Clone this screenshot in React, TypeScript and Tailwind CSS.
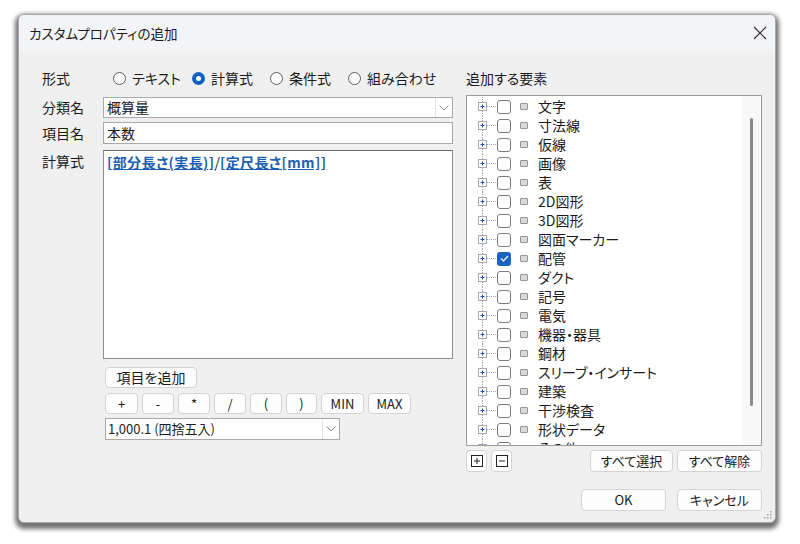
import React from 'react';

const FONT = { fontFamily: '"Noto Sans CJK JP", "Noto Sans", sans-serif' };

const TREE_ITEMS = [
  '文字', '寸法線', '仮線', '画像', '表', '2D図形', '3D図形', '図面マーカー', '配管',
  'ダクト', '記号', '電気', '機器・器具', '鋼材', 'スリーブ・インサート', '建築', '干渉検査', '形状データ', 'その他',
];

const Radio: React.FC<{ label: string; checked?: boolean; className?: string }> = ({ label, checked, className = '' }) => (
  <div className={`flex items-center gap-[6px] ${className}`}>
    {checked ? (
      <span className="w-[13px] h-[13px] rounded-full bg-[#1061c4] flex items-center justify-center shrink-0">
        <span className="w-[5px] h-[5px] rounded-full bg-white" />
      </span>
    ) : (
      <span className="w-[13px] h-[13px] rounded-full border border-[#5c5c5c] bg-white shrink-0" />
    )}
    <span className="whitespace-nowrap">{label}</span>
  </div>
);

const Button: React.FC<{ className?: string; children: React.ReactNode }> = ({ className = '', children }) => (
  <div className={`flex items-center justify-center bg-[#fdfdfd] border border-[#d3d3d3] rounded-[4px] text-[13px] text-[#1b1b1b] ${className}`}>
    {children}
  </div>
);

const Chevron = () => (
  <svg width="10" height="6" viewBox="0 0 10 6">
    <path d="M0.5 0.5 L5 5 L9.5 0.5" fill="none" stroke="#8a8a8a" strokeWidth="1" />
  </svg>
);

const TreeRow: React.FC<{ label: string; checked?: boolean }> = ({ label, checked }) => (
  <div className="flex items-center h-[19px] shrink-0">
    <svg width="30" height="19" viewBox="0 0 30 19" className="shrink-0">
      <line x1="15.5" y1="0" x2="15.5" y2="19" stroke="#a8a8a8" strokeDasharray="1 1" />
      <line x1="20" y1="9.5" x2="30" y2="9.5" stroke="#a8a8a8" strokeDasharray="1 1" />
      <rect x="11.5" y="5.5" width="8" height="8" fill="#fff" stroke="#a3a9b8" />
      <line x1="13.5" y1="9.5" x2="17.5" y2="9.5" stroke="#2a4fb5" />
      <line x1="15.5" y1="7.5" x2="15.5" y2="11.5" stroke="#2a4fb5" />
    </svg>
    {checked ? (
      <span className="w-[14px] h-[14px] rounded-[3px] bg-[#1a63c2] flex items-center justify-center shrink-0">
        <svg width="9" height="7" viewBox="0 0 9 7">
          <path d="M1 3.5 L3.5 6 L8 1" fill="none" stroke="#fff" strokeWidth="1.2" />
        </svg>
      </span>
    ) : (
      <span className="w-[14px] h-[14px] rounded-[3px] border border-[#7d7d7d] bg-white shrink-0" />
    )}
    <span className="ml-[9px] w-[8px] h-[7px] rounded-[1px] border border-[#949494] bg-[#d9d9d9] shrink-0" />
    <span className="ml-[10px] text-[14px] leading-[19px] text-[#1b1b1b] whitespace-nowrap">{label}</span>
  </div>
);

const App: React.FC = () => {
  return (
    <div className="w-[800px] h-[544px] bg-white pt-[14px] pl-[18px] [font-feature-settings:'palt']" style={FONT}>
      <div className="relative w-[758px] h-[509px] flex flex-col rounded-[6px] overflow-hidden bg-[#f0f0f0] border border-[#a8a8a8] shadow-[0_3px_4px_3px_rgba(0,0,0,0.55)]">
        {/* title bar */}
        <div className="h-[36px] shrink-0 flex items-center justify-between pl-[10px] pr-[7px] bg-[#f3f4f7]">
          <span className="text-[13.5px] text-[#1b1b1b]">カスタムプロパティの追加</span>
          <svg width="16" height="16" viewBox="0 0 16 16">
            <path d="M2 2 L14 14 M14 2 L2 14" stroke="#333" strokeWidth="1.2" />
          </svg>
        </div>

        <div className="flex-1 flex pl-[23px] pr-[13px] pt-[17px] gap-[13px] text-[14px] text-[#1b1b1b]">
          {/* left column */}
          <div className="w-[411px] flex flex-col">
            <div className="h-[20px] flex items-center">
              <span className="w-[61px]">形式</span>
              <div className="flex items-center pl-[10px]">
                <Radio label="テキスト" className="w-[79px]" />
                <Radio label="計算式" checked className="w-[78px]" />
                <Radio label="条件式" className="w-[78px]" />
                <Radio label="組み合わせ" />
              </div>
            </div>

            <div className="mt-[9px] flex items-center">
              <span className="w-[61px]">分類名</span>
              <div className="w-[350px] h-[21px] flex items-center bg-white border border-[#a9a9a9]">
                <span className="flex-1 pl-[3px] leading-[19px]">概算量</span>
                <span className="w-[17px] h-full flex items-center justify-center border-l border-[#e6e6e6]">
                  <Chevron />
                </span>
              </div>
            </div>

            <div className="mt-[4px] flex items-center">
              <span className="w-[61px]">項目名</span>
              <div className="w-[350px] h-[22px] flex items-center pl-[3px] bg-white border border-[#a9a9a9]">本数</div>
            </div>

            <div className="mt-[6px] flex items-start">
              <span className="w-[61px] mt-[1px]">計算式</span>
              <div className="w-[350px] h-[209px] bg-white border border-[#8e8e8e] border-t-[#6b6b6b] px-[3px] pt-[1px] text-[14px] leading-[20px]">
                <span className="font-bold text-[#1d5fb0] underline tracking-[0.4px]">[部分長さ(実長)]</span>
                <span>/</span>
                <span className="font-bold text-[#1d5fb0] underline tracking-[0.4px]">[定尺長さ[mm]]</span>
              </div>
            </div>

            <div className="ml-[63px] flex flex-col">
              <Button className="mt-[8px] w-[92px] h-[21px] text-[14px]">項目を追加</Button>
              <div className="mt-[5px] flex gap-[4px]">
                <Button className="w-[33px] h-[21px]">+</Button>
                <Button className="w-[32px] h-[21px]">-</Button>
                <Button className="w-[32px] h-[21px]">*</Button>
                <Button className="w-[32px] h-[21px]">/</Button>
                <Button className="w-[32px] h-[21px]">(</Button>
                <Button className="w-[31px] h-[21px]">)</Button>
                <Button className="w-[43px] h-[21px]">MIN</Button>
                <Button className="w-[43px] h-[21px]">MAX</Button>
              </div>
              <div className="mt-[4px] w-[235px] h-[22px] flex items-center bg-white border border-[#a9a9a9]">
                <span className="flex-1 pl-[2px] text-[13px]">1,000.1 (四捨五入)</span>
                <span className="w-[17px] h-full flex items-center justify-center border-l border-[#e6e6e6]">
                  <Chevron />
                </span>
              </div>
            </div>
          </div>

          {/* right column */}
          <div className="w-[296px] flex flex-col">
            <div className="h-[20px] flex items-center">追加する要素</div>
            <div className="mt-[7px] h-[351px] flex bg-white border border-[#9c9c9c] overflow-hidden">
              <div className="flex-1 flex flex-col pt-[1px] overflow-hidden">
                {TREE_ITEMS.map((item) => (
                  <TreeRow key={item} label={item} checked={item === '配管'} />
                ))}
              </div>
              <div className="w-[19px] bg-[#f8f8f8] flex justify-center">
                <div className="mt-[22px] w-[3px] h-[288px] rounded-full bg-[#8b8b8b]" />
              </div>
            </div>

            <div className="mt-[4px] flex items-center">
              <Button className="w-[21px] h-[22px]">
                <svg width="12" height="12" viewBox="0 0 12 12">
                  <rect x="0.5" y="0.5" width="11" height="11" fill="none" stroke="#222" />
                  <path d="M3 6 H9 M6 3 V9" stroke="#222" />
                </svg>
              </Button>
              <Button className="ml-[4px] w-[21px] h-[22px]">
                <svg width="12" height="12" viewBox="0 0 12 12">
                  <rect x="0.5" y="0.5" width="11" height="11" fill="none" stroke="#222" />
                  <path d="M3 6 H9" stroke="#222" />
                </svg>
              </Button>
              <div className="flex-1" />
              <Button className="w-[83px] h-[22px]">すべて選択</Button>
              <Button className="ml-[4px] w-[85px] h-[22px]">すべて解除</Button>
            </div>

            <div className="mt-[17px] flex justify-end gap-[11px]">
              <Button className="w-[85px] h-[22px]">OK</Button>
              <Button className="w-[85px] h-[22px]">キャンセル</Button>
            </div>
          </div>
        </div>

        {/* resize grip */}
        <svg width="10" height="10" viewBox="0 0 10 10" className="absolute right-[3px] bottom-[3px]">
          {[[8, 2], [8, 5], [5, 5], [8, 8], [5, 8], [2, 8]].map(([x, y], i) => (
            <rect key={i} x={x} y={y} width="1.5" height="1.5" fill="#a0a0a0" />
          ))}
        </svg>
      </div>
    </div>
  );
};

export default App;
